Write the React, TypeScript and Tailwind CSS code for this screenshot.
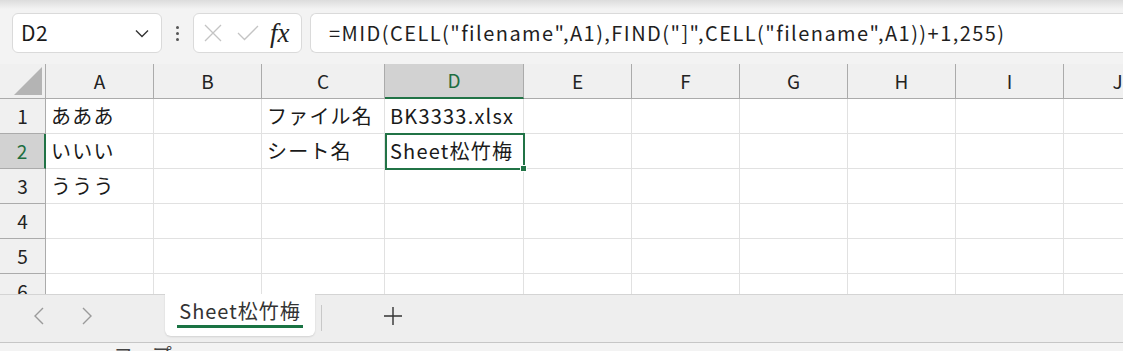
import React from "react";

const cols = [
  { key: "A", w: 108 },
  { key: "B", w: 108 },
  { key: "C", w: 123 },
  { key: "D", w: 139 },
  { key: "E", w: 108 },
  { key: "F", w: 108 },
  { key: "G", w: 108 },
  { key: "H", w: 108 },
  { key: "I", w: 108 },
  { key: "J", w: 108 },
];

const data: Record<string, string> = {
  A1: "あああ",
  A2: "いいい",
  A3: "ううう",
  C1: "ファイル名",
  D1: "BK3333.xlsx",
  C2: "シート名",
  D2: "Sheet松竹梅",
};

const formula = '=MID(CELL("filename",A1),FIND("]",CELL("filename",A1))+1,255)';

function Toolbar() {
  return (
    <div className="relative flex h-[64px] items-start bg-[#f3f3f3] pt-[13px]">
      <div className="pointer-events-none absolute inset-x-0 top-0 h-[9px] bg-gradient-to-b from-[#dcdcdc] to-[#f3f3f3]" />
      <div className="relative ml-[12px] flex h-[40px] w-[150px] items-center justify-between rounded-[6px] border border-[#dadada] bg-white pl-[8px] pr-[12px]">
        <span className="text-[21px] tracking-[0.5px] text-[#1a1a1a]">D2</span>
        <svg width="14" height="9" viewBox="0 0 14 9" fill="none">
          <path d="M1 1.5l6 6 6-6" stroke="#333" strokeWidth="1.4" />
        </svg>
      </div>
      <div className="flex h-[40px] w-[31px] flex-col items-center justify-center gap-[3px]">
        <span className="h-[3px] w-[3px] rounded-full bg-[#555]" />
        <span className="h-[3px] w-[3px] rounded-full bg-[#555]" />
        <span className="h-[3px] w-[3px] rounded-full bg-[#555]" />
      </div>
      <div className="relative flex h-[40px] w-[109px] items-center rounded-[6px] border border-[#dadada] bg-white pl-[10px]">
        <svg width="18" height="18" viewBox="0 0 18 18" fill="none">
          <path d="M1 1l16 16M17 1L1 17" stroke="#c4c4c4" strokeWidth="1.3" />
        </svg>
        <svg className="ml-[15px]" width="22" height="16" viewBox="0 0 22 16" fill="none">
          <path d="M1 8l6.5 6.5L21 1" stroke="#c4c4c4" strokeWidth="1.3" />
        </svg>
        <span className="ml-[11px] text-[27px] italic leading-none text-[#222] [font-family:'Liberation_Serif',serif]">fx</span>
      </div>
      <div className="relative ml-[8px] flex h-[40px] flex-1 items-center rounded-l-[6px] border border-r-0 border-[#dadada] bg-white pl-[18px]">
        <span className="whitespace-nowrap text-[20px] tracking-[1.45px] text-[#1f1f1f]">{formula}</span>
      </div>
    </div>
  );
}

function Grid() {
  return (
    <div className="relative h-[230px] overflow-hidden bg-white">
      <div className="grid grid-cols-[46px_108px_108px_123px_139px_108px_108px_108px_108px_108px_108px]">
        <div className="relative h-[35px] border-r border-b border-[#ababab] bg-[#f0f0f0]">
          <svg className="absolute right-[3px] bottom-[3px]" width="28" height="28" viewBox="0 0 28 28">
            <path d="M28 0V28H0Z" fill="#b4b4b4" />
          </svg>
        </div>
        {cols.map((c) => (
          <div
            key={c.key}
            className={
              c.key === "D"
                ? "flex h-[35px] items-center justify-center border-r border-b-2 border-r-[#ababab] border-b-[#217346] bg-[#d2d2d2] text-[19px] text-[#1e6e41]"
                : "flex h-[35px] items-center justify-center border-r border-b border-[#ababab] bg-[#f0f0f0] text-[19px] text-[#222]"
            }
          >
            {c.key}
          </div>
        ))}
        {[1, 2, 3, 4, 5, 6].map((r) => (
          <React.Fragment key={r}>
            <div
              className={
                r === 2
                  ? "flex h-[35px] items-center justify-center border-r-2 border-b border-r-[#217346] border-b-[#ababab] bg-[#d2d2d2] text-[19px] text-[#1e6e41]"
                  : "flex h-[35px] items-center justify-center border-r border-b border-[#ababab] bg-[#f0f0f0] text-[19px] text-[#222]"
              }
            >
              {r}
            </div>
            {cols.map((c) => (
              <div
                key={c.key}
                className="flex h-[35px] items-center overflow-visible whitespace-nowrap border-r border-b border-[#e1e1e1] pl-[5px] text-[20px] tracking-[1.2px] text-[#1a1a1a]"
              >
                {data[c.key + r] ?? ""}
              </div>
            ))}
          </React.Fragment>
        ))}
      </div>
      <div className="pointer-events-none absolute left-[385px] top-[69px] h-[37px] w-[140px] border-2 border-[#217346]" />
      <div className="pointer-events-none absolute left-[520px] top-[101px] h-[7px] w-[7px] border border-white bg-[#217346]" />
    </div>
  );
}

function Tabs() {
  return (
    <div className="flex h-[48px] items-start border-t border-[#d4d4d4] bg-[#eeeeee]">
      <div className="flex h-[42px] w-[165px] items-center gap-[36px] pl-[33px]">
        <svg width="12" height="18" viewBox="0 0 12 18" fill="none">
          <path d="M10 1L2 9l8 8" stroke="#9a9a9a" strokeWidth="1.4" />
        </svg>
        <svg width="12" height="18" viewBox="0 0 12 18" fill="none">
          <path d="M2 1l8 8-8 8" stroke="#9a9a9a" strokeWidth="1.4" />
        </svg>
      </div>
      <div className="-mt-px flex h-[42px] w-[150px] flex-col items-center rounded-b-[6px] bg-white pt-[4px] shadow-[0_1px_2px_rgba(0,0,0,0.12)]">
        <span className="text-[20px] leading-[26px] tracking-[1px] text-[#333]">Sheet松竹梅</span>
        <span className="mt-[1px] h-[3px] w-[126px] bg-[#1a7343]" />
      </div>
      <div className="ml-[6px] mt-[10px] h-[26px] w-px bg-[#c8c8c8]" />
      <div className="ml-[62px] flex h-[42px] items-center">
        <svg width="18" height="18" viewBox="0 0 18 18" fill="none">
          <path d="M9 0v18M0 9h18" stroke="#333" strokeWidth="1.4" />
        </svg>
      </div>
    </div>
  );
}

export default function App() {
  return (
    <div className="h-[351px] w-[1123px] overflow-hidden bg-[#f3f3f3] [font-family:'Noto_Sans_CJK_JP',sans-serif]">
      <Toolbar />
      <Grid />
      <Tabs />
      <div className="h-px bg-[#c6c6c6]" />
      <div className="relative h-[40px] bg-[#f3f3f3]">
        <span className="absolute left-[113px] top-[2px] text-[20px] leading-none text-[#444]">コープ</span>
      </div>
    </div>
  );
}
